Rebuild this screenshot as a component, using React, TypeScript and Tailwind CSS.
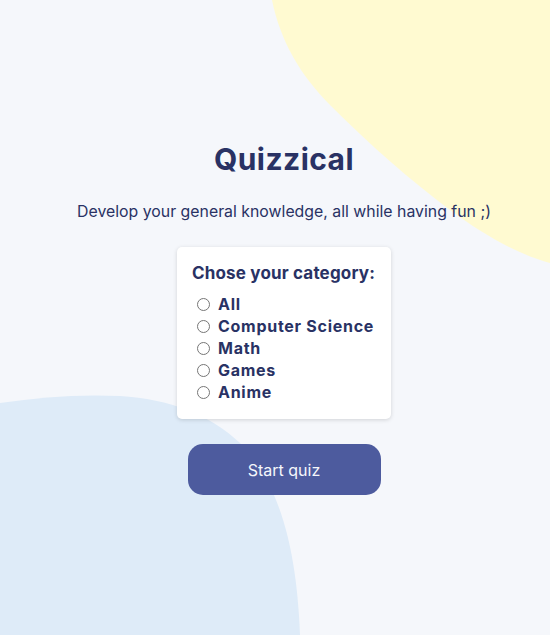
import React from "react";

const categories = ["All", "Computer Science", "Math", "Games", "Anime"];

export default function App() {
  return (
    <div className="relative w-full min-h-[635px] overflow-hidden bg-[#F5F7FB]">
      <svg className="absolute top-0 right-0" width="280" height="266" viewBox="0 0 280 266">
        <path d="M2 0 C 10 40, 30 75, 60 105 C 100 145, 140 180, 180 210 C 215 236, 250 255, 280 263 L 280 0 Z" fill="#FFFAD1" />
      </svg>
      <svg className="absolute left-0 bottom-0" width="302" height="240" viewBox="0 0 302 240">
        <path d="M0 8 C 40 2, 80 -1, 120 1 C 170 4, 210 20, 240 48 C 275 85, 296 140, 300 240 L 0 240 Z" fill="#DEEBF8" />
      </svg>
      <div className="relative flex flex-col items-center pl-[18px]">
        <h1 className="mt-[140px] text-[30px] leading-[38px] font-bold tracking-[0.015em] text-[#293264] [font-family:Inter,sans-serif]">
          Quizzical
        </h1>
        <p className="mt-[22px] text-[15.85px] leading-[24px] text-[#293264] [font-family:Inter,sans-serif]">
          Develop your general knowledge, all while having fun ;)
        </p>
        <div className="mt-[23px] w-[214px] rounded-[5px] bg-white pt-[15px] pb-[16px] px-[15px] shadow-[0_1px_4px_rgba(0,0,0,0.15)] text-[#293264] [font-family:Inter,sans-serif]">
          <div className="whitespace-nowrap text-[17px] leading-[22px] font-bold tracking-[0.01em]">Chose your category:</div>
          <div className="mt-[9px] flex flex-col">
            {categories.map((c) => (
              <label key={c} className="flex items-center h-[22px] whitespace-nowrap text-[16px] font-bold tracking-[0.045em]">
                <span className="ml-[5px] mr-[8px] w-[13px] h-[13px] rounded-full border border-[#767676] bg-white" />
                {c}
              </label>
            ))}
          </div>
        </div>
        <button className="mt-[25px] w-[193px] h-[51px] rounded-[15px] bg-[#4D5B9E] text-[#F5F7FB] text-[16px] [font-family:Inter,sans-serif]">
          Start quiz
        </button>
      </div>
    </div>
  );
}
